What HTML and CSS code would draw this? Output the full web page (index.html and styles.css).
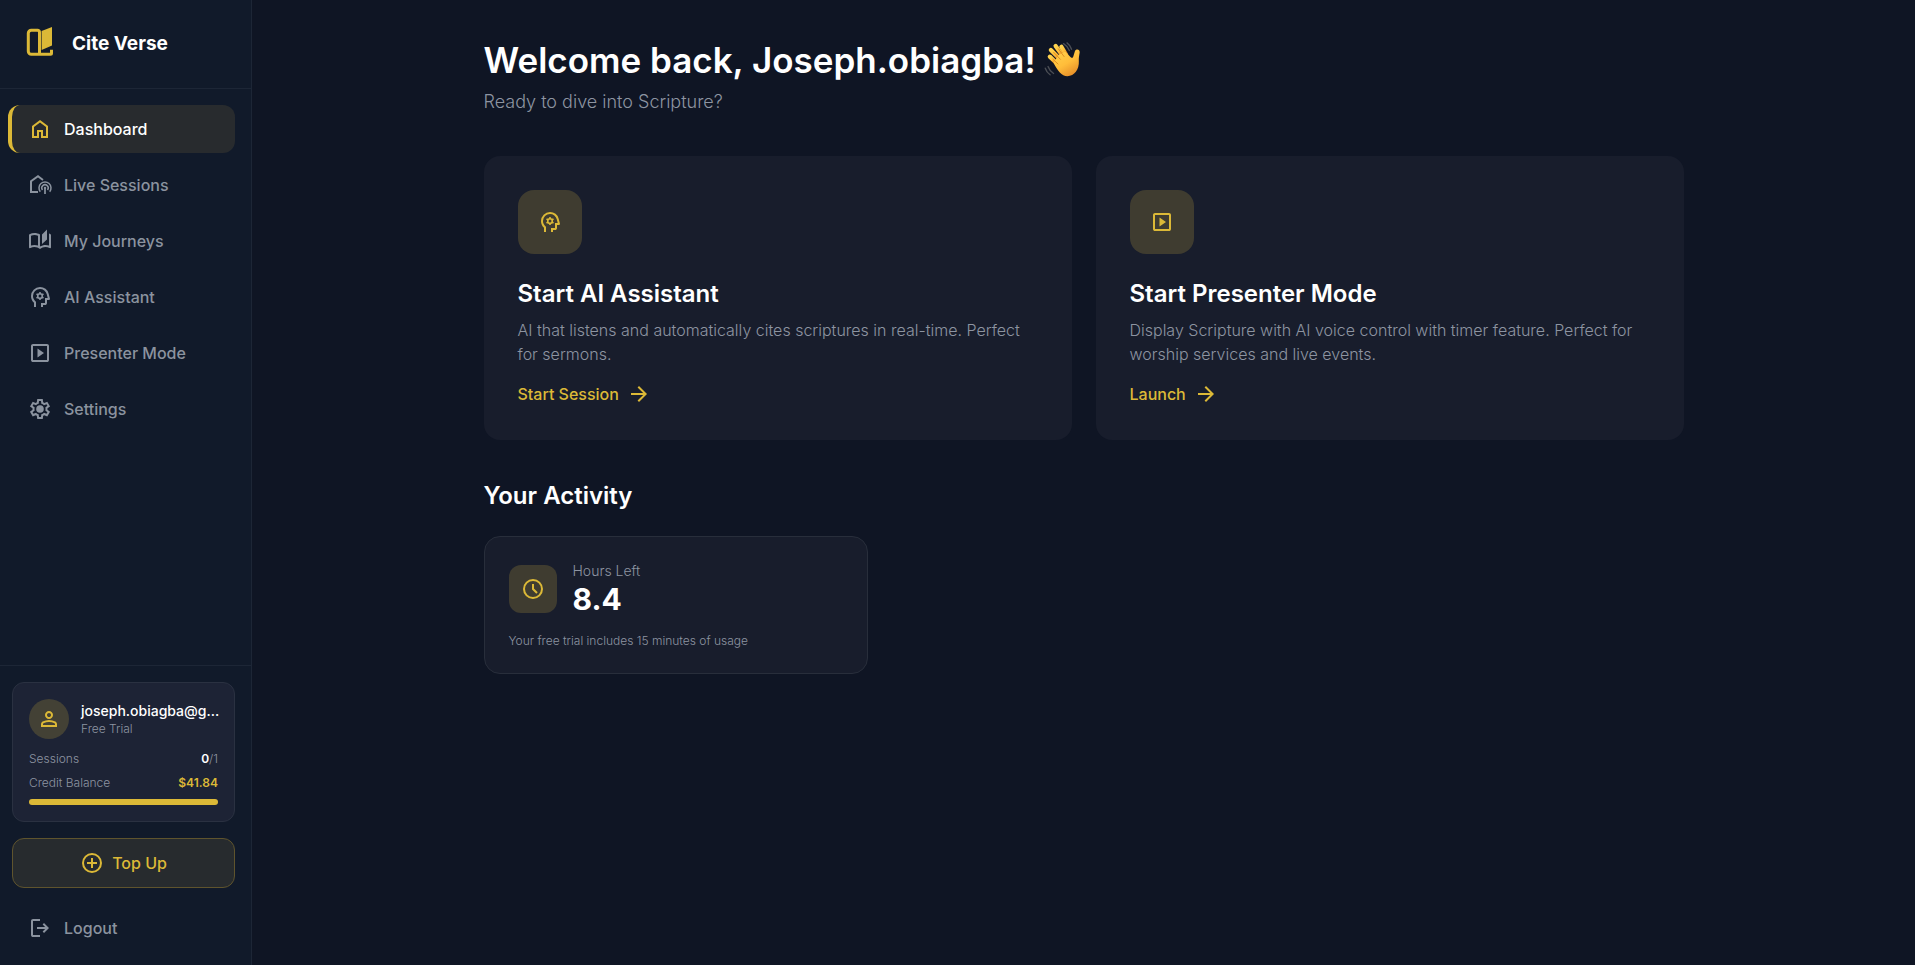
FILE: index.html
```html
<!DOCTYPE html>
<html lang="en">
<head>
<meta charset="utf-8">
<meta name="viewport" content="width=device-width, initial-scale=1">
<title>Cite Verse</title>
<link rel="stylesheet" href="styles.css">
</head>
<body>
<svg class="sprite" aria-hidden="true">
  <symbol id="i-head" viewBox="0 0 24 24">
    <path d="M6 22v-4.3q-1.425-1.3-2.212-3.037T3 11q0-3.75 2.625-6.375T12 2q3.125 0 5.538 1.838t3.137 4.787l1.3 5.125q.125.475-.175.863T21 15h-2v3q0 .825-.588 1.413T17 20h-2v2h-2v-4h4v-5h2.7l-.95-3.875q-.575-2.275-2.45-3.7T12 4Q9.1 4 7.05 6.025T5 10.95q0 1.5.613 2.85t1.737 2.4l.65.6V22z"/>
    <circle cx="12" cy="11" r="2.3" fill="none" stroke="currentColor" stroke-width="1.6"/>
    <path d="M11.2 7h1.6v2h-1.6zM11.2 13h1.6v2h-1.6zM8.1 9.7l.8-1.4 1.8 1-.8 1.4zM13.3 12.7l.8-1.4 1.8 1-.8 1.4zM15.1 8.3l.8 1.4-1.8 1-.8-1.4zM9.9 11.3l.8 1.4-1.8 1-.8-1.4z"/>
  </symbol>
  <symbol id="i-play" viewBox="0 0 24 24">
    <path d="M9.500 16.500l6.500-4.500-6.500-4.500zM5 21q-.825 0-1.412-.587T3 19V5q0-.825.588-1.412T5 3h14q.825 0 1.413.588T21 5v14q0 .825-.587 1.413T19 21zm0-2h14V5H5z"/>
  </symbol>
  <symbol id="i-arrow" viewBox="0 0 24 24">
    <path d="M16.175 13H4v-2h12.175l-5.6-5.6L12 4l8 8-8 8-1.425-1.4z"/>
  </symbol>
</svg>

<div class="app">
  <aside class="sidebar">
    <div class="brand">
      <svg class="logo" viewBox="0 0 32 32" aria-hidden="true">
        <path d="M15.500 30.300V8.200a1.900 1.900 0 0 0-1.900-1.900H7.300a3 3 0 0 0-3 3v18a3 3 0 0 0 3 3h19.200a1 1 0 0 0 1-1v-3.600" fill="none" stroke="currentColor" stroke-width="3"/>
        <path d="M17.600 7L28 3v18.500L17.600 26z"/>
      </svg>
      <span class="brand-name">Cite Verse</span>
    </div>

    <nav class="nav">
      <a class="nav-item active" href="#">
        <svg class="icon" viewBox="0 0 24 24" aria-hidden="true"><path d="M6 19h3v-6h6v6h3v-9l-6-4.500L6 10zm-2 2V9l8-6 8 6v12h-7v-6h-2v6z"/></svg>
        Dashboard
      </a>
      <a class="nav-item" href="#">
        <svg class="icon" viewBox="0 0 24 24" aria-hidden="true">
          <g fill="none" stroke="currentColor">
            <path d="M10 19H3V8.300L10 3.200l5 3.800" stroke-width="2"/>
            <path d="M12.300 18.700a6 6 0 1 1 9.400 0" stroke-width="1.500"/>
            <path d="M14.500 17a3.200 3.200 0 1 1 5 0" stroke-width="1.500"/>
            <path d="M17 15v6" stroke-width="1.700"/>
          </g>
          <circle cx="17" cy="15" r="1.200"/>
        </svg>
        Live Sessions
      </a>
      <a class="nav-item" href="#">
        <svg class="icon" viewBox="0 0 24 24" aria-hidden="true"><path d="M22.470 5.200C22 4.960 21.510 4.760 21 4.590v12.030C19.860 16.210 18.690 16 17.500 16c-1.900 0-3.780.54-5.500 1.580V5.480C10.380 4.550 8.510 4 6.500 4 4.710 4 3.020 4.440 1.530 5.200 1.200 5.360 1 5.710 1 6.080v12.080c0 .58.47.99 1 .99.16 0 .32-.04.48-.12C3.690 18.400 5.050 18 6.500 18c2.070 0 3.980.82 5.500 2 1.520-1.180 3.430-2 5.500-2 1.450 0 2.810.4 4.020 1.040.16.08.32.12.48.12.52 0 1-.41 1-.99V6.080c0-.37-.2-.72-.53-.88zM10 16.620C8.860 16.210 7.690 16 6.500 16s-2.360.21-3.500.62V6.710C4.110 6.240 5.280 6 6.500 6c1.200 0 2.390.25 3.500.72zM19 .5l-5 5V15l5-4.500z"/></svg>
        My Journeys
      </a>
      <a class="nav-item" href="#">
        <svg class="icon" aria-hidden="true"><use href="#i-head"/></svg>
        AI Assistant
      </a>
      <a class="nav-item" href="#">
        <svg class="icon" aria-hidden="true"><use href="#i-play"/></svg>
        Presenter Mode
      </a>
      <a class="nav-item" href="#">
        <svg class="icon" viewBox="0 0 24 24" aria-hidden="true"><path d="m9.250 22-.4-3.200q-.325-.125-.612-.3t-.563-.375L4.700 19.375l-2.750-4.750 2.575-1.950Q4.500 12.500 4.500 12.337v-.675q0-.162.025-.337L1.950 9.375l2.750-4.750 2.975 1.250q.275-.2.575-.375t.6-.3l.4-3.200h5.500l.4 3.200q.325.125.613.3t.562.375l2.975-1.250 2.750 4.750-2.575 1.950q.025.175.025.337v.675q0 .163-.05.338l2.575 1.950-2.750 4.750-2.950-1.250q-.275.2-.575.375t-.6.3l-.4 3.200zM11 20h1.975l.35-2.650q.775-.2 1.438-.587t1.212-.938l2.475 1.025.975-1.700-2.150-1.625q.125-.35.175-.737T17.500 12t-.05-.787-.175-.738l2.150-1.625-.975-1.700-2.475 1.050q-.55-.575-1.212-.962t-1.438-.588L13 4h-1.975l-.35 2.650q-.775.2-1.437.588t-1.213.937L5.550 7.150l-.975 1.700 2.150 1.600q-.125.375-.175.75t-.05.8q0 .4.05.775t.175.75l-2.150 1.625.975 1.700 2.475-1.050q.55.575 1.213.963t1.437.587z"/><circle cx="12" cy="12" r="3.800"/></svg>
        Settings
      </a>
    </nav>

    <div class="side-foot">
      <section class="account">
        <div class="account-head">
          <span class="avatar">
            <svg class="icon" viewBox="0 0 24 24" aria-hidden="true"><path d="M12 12q-1.650 0-2.825-1.175T8 8t1.175-2.825T12 4t2.825 1.175T16 8t-1.175 2.825T12 12m-8 8v-2.800q0-.85.438-1.562T5.600 14.550q1.550-.775 3.150-1.162T12 13t3.250.388 3.150 1.162q.725.375 1.163 1.088T20 17.200V20zm2-2h12v-.8q0-.275-.137-.5t-.363-.35q-1.350-.675-2.725-1.012T12 15t-2.775.338T6.500 16.350q-.225.125-.363.35T6 17.200zm6-8q.825 0 1.413-.587T14 8t-.587-1.412T12 6t-1.412.588T10 8t.588 1.413T12 10"/></svg>
          </span>
          <div class="account-id">
            <div class="account-name">joseph.obiagba@g…</div>
            <div class="account-plan">Free Trial</div>
          </div>
        </div>
        <div class="account-rows">
          <div class="account-row"><span>Sessions</span><span><b class="count">0</b>/1</span></div>
          <div class="account-row"><span>Credit Balance</span><b class="money">$41.84</b></div>
          <div class="bar"><div class="bar-fill"></div></div>
        </div>
      </section>
      <button class="topup" type="button">
        <svg class="icon" viewBox="0 0 24 24" aria-hidden="true"><g fill="none" stroke="currentColor" stroke-width="2"><circle cx="12" cy="12" r="9"/><path d="M12 7v10M7 12h10"/></g></svg>
        Top Up
      </button>
      <a class="logout" href="#">
        <svg class="icon" viewBox="0 0 24 24" aria-hidden="true"><path d="M5 21q-.825 0-1.412-.587T3 19V5q0-.825.588-1.412T5 3h7v2H5v14h7v2zm11-4-1.375-1.450 2.550-2.550H9v-2h8.175l-2.550-2.550L16 7l5 5z"/></svg>
        Logout
      </a>
    </div>
  </aside>

  <main class="main">
    <div class="content">
      <h1 class="title">
        Welcome back, Joseph.obiagba!
        <svg class="wave" viewBox="0 0 36 36" role="img" aria-label="Waving hand">
          <defs>
            <linearGradient id="skin" x1="0" y1="0" x2="0.6" y2="1">
              <stop offset="0" stop-color="#ffd44f"/>
              <stop offset="0.6" stop-color="#ffbd3a"/>
              <stop offset="1" stop-color="#e8922a"/>
            </linearGradient>
          </defs>
          <g fill="none" stroke="#4b4e55" stroke-width="1.300" stroke-linecap="round">
            <path d="M18.500 2.500q3.500 2 5.500 6.500M21.800 1.800q3 2.200 4.300 6"/>
            <path d="M3.800 24.200q1.500 4.300 5.300 6.600M1.200 25.800q1.300 4 4.600 6.200"/>
          </g>
          <g stroke="url(#skin)" stroke-width="4" stroke-linecap="round">
            <path d="M15 17L6.500 8.500"/>
            <path d="M18 14.500L11 4.800"/>
            <path d="M21 13L16.500 5.500"/>
            <path d="M12 21L5.500 14.800"/>
          </g>
          <path d="M9 20.500L14 13l6-3 5.300 5.300c1.300 1.300 2.200.5 2.600-1.200l1.300-4.200c.9-2.900 5-2.200 4.600.9-.4 2.600-1 5-.8 8.200.5 8-4.300 14.300-10.800 14.300-5.600 0-9.200-5.200-13.200-12.800z" fill="url(#skin)"/>
          <path d="M9.200 10.800l6.300 6.500M13.600 7.400l5.400 7.300M8.500 17.300l4.800 4.500" stroke="#dd8b20" stroke-width="0.900" stroke-linecap="round" fill="none"/>
        </svg>
      </h1>
      <p class="subtitle">Ready to dive into Scripture?</p>

      <div class="actions">
        <a class="action" href="#">
          <span class="action-icon"><svg class="icon" aria-hidden="true"><use href="#i-head"/></svg></span>
          <h2 class="heading">Start AI Assistant</h2>
          <p class="action-text">AI that listens and automatically cites scriptures in real-time. Perfect for sermons.</p>
          <span class="action-link">Start Session <svg class="icon" aria-hidden="true"><use href="#i-arrow"/></svg></span>
        </a>
        <a class="action" href="#">
          <span class="action-icon"><svg class="icon" aria-hidden="true"><use href="#i-play"/></svg></span>
          <h2 class="heading">Start Presenter Mode</h2>
          <p class="action-text">Display Scripture with AI voice control with timer feature. Perfect for worship services and live events.</p>
          <span class="action-link">Launch <svg class="icon" aria-hidden="true"><use href="#i-arrow"/></svg></span>
        </a>
      </div>

      <h2 class="heading section">Your Activity</h2>
      <div class="stats">
        <section class="stat">
          <div class="stat-head">
            <span class="stat-icon">
              <svg class="icon" viewBox="0 0 24 24" aria-hidden="true"><g fill="none" stroke="currentColor" stroke-width="2"><circle cx="12" cy="12" r="9"/><path d="M12 7v5l4 4"/></g></svg>
            </span>
            <div>
              <div class="stat-label">Hours Left</div>
              <div class="stat-value">8.4</div>
            </div>
          </div>
          <p class="stat-note">Your free trial includes 15 minutes of usage</p>
        </section>
      </div>
    </div>
  </main>
</div>
</body>
</html>
```

FILE: styles.css
```css
:root {
  --bg: #0f1524;
  --side: #111a2a;
  --card: #181d2c;
  --line: #1d2636;
  --gold: #dcb937;
  --gold-soft: #3f3c30;
  --muted: #8b939f;
  --dim: #8d94a1;
}

* { box-sizing: border-box; }

body {
  margin: 0;
  background: var(--bg);
  color: #fff;
  font-family: Inter, "Liberation Sans", sans-serif;
  font-size: 16px;
  line-height: 24px;
}

h1, h2, p { margin: 0; }
a { color: inherit; text-decoration: none; }

.sprite { position: absolute; width: 0; height: 0; }
.icon { width: 24px; height: 24px; flex: none; fill: currentColor; }

.app { display: flex; min-height: 100vh; }

.sidebar {
  width: 252px;
  flex: none;
  display: flex;
  flex-direction: column;
  background: var(--side);
  border-right: 1px solid var(--line);
}

.brand {
  display: flex;
  align-items: center;
  gap: 16px;
  height: 89px;
  padding: 0 24px;
  border-bottom: 1px solid var(--line);
}
.logo { width: 32px; height: 32px; fill: currentColor; color: var(--gold); margin-bottom: 8px; }
.brand-name { font-size: 19px; font-weight: 700; }

.nav {
  flex: 1;
  display: flex;
  flex-direction: column;
  gap: 8px;
  padding: 16px 16px 16px 8px;
}
.nav-item {
  display: flex;
  align-items: center;
  gap: 12px;
  height: 48px;
  padding: 0 16px;
  border-left: 4px solid transparent;
  border-radius: 12px;
  color: var(--muted);
  font-weight: 500;
}
.nav-item.active { background: #282b2e; border-left-color: var(--gold); color: #fff; }
.nav-item.active .icon { color: var(--gold); }

.side-foot {
  display: flex;
  flex-direction: column;
  gap: 16px;
  padding: 16px 16px 13px 12px;
  border-top: 1px solid var(--line);
}
.account {
  padding: 16px;
  border: 1px solid #2a3141;
  border-radius: 12px;
  background: #1d2335;
  color: var(--dim);
  font-size: 12px;
  font-weight: 300;
  line-height: 16px;
}
.account-head { display: flex; align-items: center; gap: 12px; }
.avatar {
  display: grid;
  place-items: center;
  width: 40px;
  height: 40px;
  flex: none;
  border-radius: 50%;
  background: #434135;
  color: var(--gold);
}
.account-id { min-width: 0; }
.account-name { color: #fff; font-size: 14px; line-height: 20px; font-weight: 500; white-space: nowrap; }
.account-rows { display: flex; flex-direction: column; gap: 8px; margin-top: 12px; }
.account-row { display: flex; justify-content: space-between; }
.count { color: #fff; font-weight: 600; }
.money { color: var(--gold); font-weight: 600; }
.bar { height: 6px; border-radius: 3px; background: #2a3141; overflow: hidden; }
.bar-fill { width: 100%; height: 100%; background: var(--gold); }

.topup {
  display: flex;
  align-items: center;
  justify-content: center;
  gap: 8px;
  height: 50px;
  border: 1px solid #5f542d;
  border-radius: 12px;
  background: #272b2e;
  color: var(--gold);
  font: inherit;
  font-weight: 500;
}
.logout {
  display: flex;
  align-items: center;
  gap: 12px;
  height: 48px;
  padding: 0 16px;
  color: var(--muted);
  font-weight: 500;
}

.main { flex: 1; min-width: 0; padding: 40px 32px; }
.content { max-width: 1200px; margin: 0 auto; }

.title {
  display: flex;
  align-items: center;
  gap: 8px;
  font-size: 35px;
  line-height: 40px;
  font-weight: 600;
}
.wave { width: 38px; height: 38px; flex: none; }
.subtitle { margin-top: 8px; color: var(--dim); font-size: 18px; line-height: 28px; font-weight: 300; }

.actions { display: grid; grid-template-columns: 1fr 1fr; gap: 24px; margin-top: 40px; }
.action { display: block; padding: 34px; border-radius: 16px; background: var(--card); }
.action-icon {
  display: grid;
  place-items: center;
  width: 64px;
  height: 64px;
  margin-bottom: 24px;
  border-radius: 16px;
  background: var(--gold-soft);
  color: var(--gold);
}
.heading { font-size: 24px; line-height: 32px; font-weight: 600; }
.action-text { margin-top: 8px; color: var(--dim); font-weight: 300; }
.action-link {
  display: flex;
  align-items: center;
  gap: 8px;
  margin-top: 16px;
  color: var(--gold);
  font-weight: 500;
}

.section { margin: 40px 0 24px; }
.stats { display: grid; grid-template-columns: repeat(3, 1fr); gap: 24px; }
.stat { padding: 24px; border: 1px solid #282e3b; border-radius: 16px; background: var(--card); }
.stat-head { display: flex; align-items: center; gap: 16px; }
.stat-icon {
  display: grid;
  place-items: center;
  width: 48px;
  height: 48px;
  border-radius: 12px;
  background: var(--gold-soft);
  color: var(--gold);
}
.stat-label { color: var(--dim); font-size: 14px; line-height: 20px; font-weight: 300; }
.stat-value { font-size: 30px; line-height: 36px; font-weight: 700; }
.stat-note { margin-top: 16px; color: var(--dim); font-size: 12px; line-height: 16px; font-weight: 300; }
```
